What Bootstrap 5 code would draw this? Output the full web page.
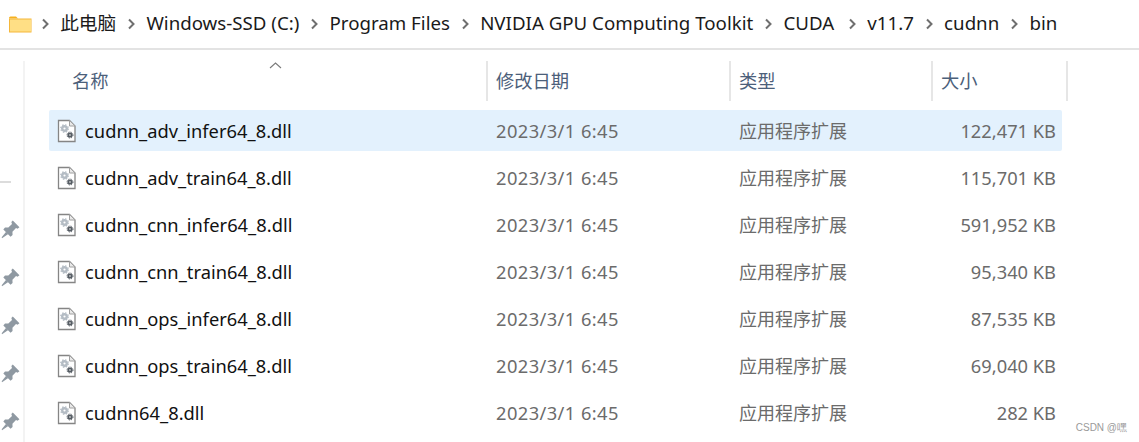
<!DOCTYPE html>
<html lang="zh">
<head>
<meta charset="utf-8">
<title>bin</title>
<link rel="stylesheet" href="https://cdn.jsdelivr.net/npm/bootstrap@5.3.0/dist/css/bootstrap.min.css">
<style>
html,body{height:442px;overflow:hidden;background:#fff}
body{font-family:"Noto Sans","Noto Sans CJK SC",sans-serif;font-size:18.3px;line-height:26px;color:#1a1a1a;position:relative}
.crumbs{height:50px;border-bottom:2px solid #e3e3e3;padding-left:9px;font-size:18.7px}
.crumbs .cr-sep{width:9px;height:12px;margin:0 10.6px;flex:none}
.crumbs .cr-sep.cr-wide{margin-left:13.6px}
.crumbs .cr-folder{width:23px;height:17px;flex:none;margin-right:-2px}
.crumbs span{white-space:nowrap;margin-top:-2px}
.main{height:392px}
.side{width:25px;height:381px;margin-top:11px;border-right:2px solid #f3f3f3;flex:none;padding-top:120px}
.dash{width:11px;height:2px;background:#dcdcdc;margin-bottom:37px}
.pin{width:20px;height:20px;display:block;margin-bottom:28px}
.files{margin-left:24px;width:1020px}
.heads{height:40px;margin-top:11px;margin-bottom:9px;color:#4c607a;position:relative}
.hcol{height:40px;display:flex;align-items:center;flex:none;border-right:2px solid #e6e6e6;padding-left:8px}
.hcol.col-name{width:439px;padding-left:23px}
.hcol.col-date{width:243px}
.hcol.col-type{width:202px}
.hcol.col-size{width:135px}
.sort{position:absolute;left:220px;top:1px;width:13px;height:7px}
.frow{height:41px;margin-bottom:6px;width:1013px;border-radius:2px;display:flex;align-items:center;color:#6b6b6b}
.frow.sel{background:#e3f1fd}
.fname{width:447px;padding-left:8px;color:#111;display:flex;align-items:center;gap:8px;flex:none;letter-spacing:.03px}
.fname svg{width:20px;height:24px;flex:none}
.fdate{width:243px;flex:none;letter-spacing:.42px}
.ftype{width:190px;flex:none;font-size:18px}
.fsize{flex:1;text-align:right;padding-right:6px}
.mark-csdn{position:absolute;right:12px;bottom:8px;font-family:"Liberation Sans",sans-serif;font-size:10px;line-height:12px;color:#9a9a9a}
</style>
</head>
<body>
<svg width="0" height="0" class="d-block position-absolute">
  <defs>
    <symbol id="dll" viewBox="0 0 20 24">
      <path d="M1.500 1.500H12.500L18 7V22.500H1.500Z" fill="#fff" stroke="#858585" stroke-width="1.300"/>
      <path d="M12.500 1.500V7H18Z" fill="#e9e9e9" stroke="#a0a0a0" stroke-width="1"/>
      <circle cx="7.500" cy="9.500" r="2.300" fill="none" stroke="#b4bcc4" stroke-width="2.400"/>
      <circle cx="7.500" cy="9.500" r="3.800" fill="none" stroke="#b4bcc4" stroke-width="1.200" stroke-dasharray="1.500 1.500"/>
      <circle cx="13" cy="16" r="1.700" fill="#fff" stroke="#555c63" stroke-width="1.800"/>
      <circle cx="13" cy="16" r="3" fill="none" stroke="#555c63" stroke-width="1" stroke-dasharray="1.200 1.200"/>
    </symbol>
    <symbol id="pinico" viewBox="0 0 18 18">
      <path d="M11.500 .5L17.500 6.500L15.800 7.800L14.400 7.300L11.200 10.500L11.300 13.500L9.500 15L3 8.500L4.500 6.800L7.500 6.800L10.800 3.500L10.200 1.800Z" fill="#8f99a2"/>
      <path d="M5.500 10.500L1.500 15.500L1.800 16.500L7.500 12.500Z" fill="#8f99a2"/>
    </symbol>
    <symbol id="sep" viewBox="0 0 9 12">
      <path d="M2 1.500L6.500 6L2 10.500" fill="none" stroke="#6f6f6f" stroke-width="2"/>
    </symbol>
  </defs>
</svg>

<nav class="crumbs d-flex align-items-center">
  <svg class="cr-folder" viewBox="0 0 23 17">
    <path d="M0 2A1.500 1.500 0 0 1 1.500 .5H7L9 2.500H0Z" fill="#f5b120"/>
    <rect x="0" y="2.500" width="22.500" height="14" fill="#f5b73a"/>
    <rect x="1" y="3.500" width="21" height="12" fill="#ffdf85"/>
  </svg>
  <svg class="cr-sep"><use href="#sep"/></svg><span>此电脑</span>
  <svg class="cr-sep"><use href="#sep"/></svg><span>Windows-SSD (C:)</span>
  <svg class="cr-sep"><use href="#sep"/></svg><span>Program Files</span>
  <svg class="cr-sep"><use href="#sep"/></svg><span>NVIDIA GPU Computing Toolkit</span>
  <svg class="cr-sep"><use href="#sep"/></svg><span>CUDA</span>
  <svg class="cr-sep cr-wide"><use href="#sep"/></svg><span>v11.7</span>
  <svg class="cr-sep"><use href="#sep"/></svg><span>cudnn</span>
  <svg class="cr-sep"><use href="#sep"/></svg><span>bin</span>
</nav>

<div class="main d-flex">
  <div class="side">
    <div class="dash"></div>
    <svg class="pin"><use href="#pinico"/></svg>
    <svg class="pin"><use href="#pinico"/></svg>
    <svg class="pin"><use href="#pinico"/></svg>
    <svg class="pin"><use href="#pinico"/></svg>
    <svg class="pin"><use href="#pinico"/></svg>
  </div>
  <div class="files">
    <div class="heads d-flex">
      <svg class="sort" viewBox="0 0 13 7"><path d="M1 6L6.500 1L12 6" fill="none" stroke="#7a7a7a" stroke-width="1.100"/></svg>
      <div class="hcol col-name">名称</div>
      <div class="hcol col-date">修改日期</div>
      <div class="hcol col-type">类型</div>
      <div class="hcol col-size">大小</div>
    </div>
    <div class="frow sel"><div class="fname"><svg><use href="#dll"/></svg>cudnn_adv_infer64_8.dll</div><div class="fdate">2023/3/1 6:45</div><div class="ftype">应用程序扩展</div><div class="fsize">122,471 KB</div></div>
    <div class="frow"><div class="fname"><svg><use href="#dll"/></svg>cudnn_adv_train64_8.dll</div><div class="fdate">2023/3/1 6:45</div><div class="ftype">应用程序扩展</div><div class="fsize">115,701 KB</div></div>
    <div class="frow"><div class="fname"><svg><use href="#dll"/></svg>cudnn_cnn_infer64_8.dll</div><div class="fdate">2023/3/1 6:45</div><div class="ftype">应用程序扩展</div><div class="fsize">591,952 KB</div></div>
    <div class="frow"><div class="fname"><svg><use href="#dll"/></svg>cudnn_cnn_train64_8.dll</div><div class="fdate">2023/3/1 6:45</div><div class="ftype">应用程序扩展</div><div class="fsize">95,340 KB</div></div>
    <div class="frow"><div class="fname"><svg><use href="#dll"/></svg>cudnn_ops_infer64_8.dll</div><div class="fdate">2023/3/1 6:45</div><div class="ftype">应用程序扩展</div><div class="fsize">87,535 KB</div></div>
    <div class="frow"><div class="fname"><svg><use href="#dll"/></svg>cudnn_ops_train64_8.dll</div><div class="fdate">2023/3/1 6:45</div><div class="ftype">应用程序扩展</div><div class="fsize">69,040 KB</div></div>
    <div class="frow"><div class="fname"><svg><use href="#dll"/></svg>cudnn64_8.dll</div><div class="fdate">2023/3/1 6:45</div><div class="ftype">应用程序扩展</div><div class="fsize">282 KB</div></div>
  </div>
</div>
<div class="mark-csdn">CSDN @嘿</div>
</body>
</html>
